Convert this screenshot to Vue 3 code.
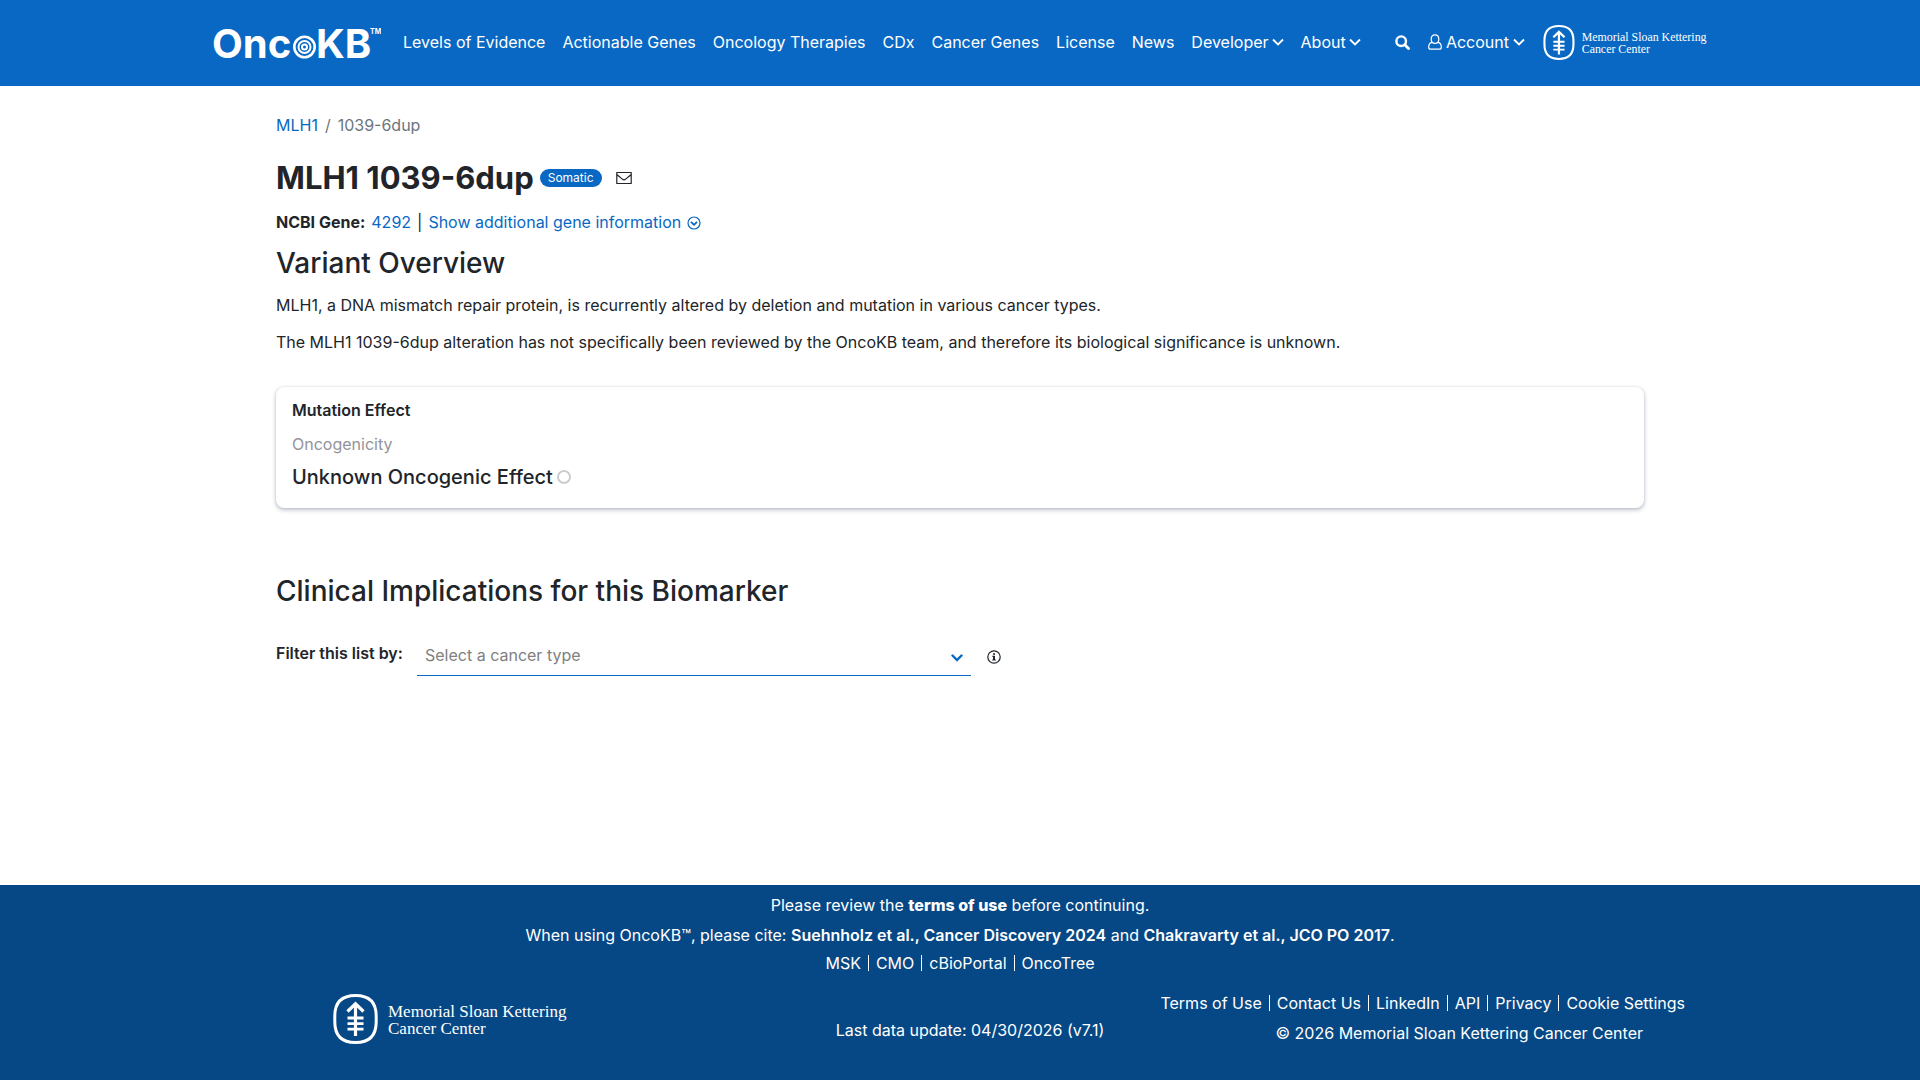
<script setup>
import { h, ref } from 'vue'

const navLinks = [
  'Levels of Evidence',
  'Actionable Genes',
  'Oncology Therapies',
  'CDx',
  'Cancer Genes',
  'License',
  'News'
]
const menus = ['Developer', 'About']
const partnerLinks = ['MSK', 'CMO', 'cBioPortal', 'OncoTree']
const legalLinks = ['Terms of Use', 'Contact Us', 'LinkedIn', 'API', 'Privacy', 'Cookie Settings']
const cancerType = ref('')

const MskLogo = () =>
  h('svg', { viewBox: '0 0 238 50', role: 'img', 'aria-label': 'Memorial Sloan Kettering Cancer Center' }, [
    h('path', {
      d: 'M22.5 1.5C36 1.5 43.2 8 43.2 22V28C43.2 42 36 48.5 22.5 48.5S1.8 42 1.8 28V22C1.8 8 9 1.5 22.5 1.5Z',
      fill: 'none',
      stroke: 'currentColor',
      'stroke-width': 3
    }),
    h('path', { d: 'M22.5 42V10M14.5 17.5L22.5 9.8L30.5 17.5', fill: 'none', stroke: 'currentColor', 'stroke-width': 3.2 }),
    h('path', { d: 'M14.5 24H30.5M14.5 29.6H30.5M14.5 35.2H30.5', stroke: 'currentColor', 'stroke-width': 2.8 }),
    h('text', { x: 55, y: 23, 'font-size': 17, 'font-family': 'Liberation Serif, serif', fill: 'currentColor' }, 'Memorial Sloan Kettering'),
    h('text', { x: 55, y: 40, 'font-size': 17, 'font-family': 'Liberation Serif, serif', fill: 'currentColor' }, 'Cancer Center')
  ])
</script>

<template>
  <div class="page">
    <header class="topbar">
      <div class="topbar-inner">
        <a href="#" class="brand" aria-label="OncoKB">
          <svg viewBox="-3 -10 171 54" width="171" height="54">
            <g fill="#fff" font-family="Inter, sans-serif" font-weight="700">
              <text x="-1" y="33" font-size="40">Onc</text>
              <text x="103" y="33" font-size="40">KB</text>
              <text x="157" y="9" font-size="7">TM</text>
            </g>
            <g fill="none" stroke="#fff" transform="translate(91.500 22)">
              <circle r="10.200" stroke-width="2.600" />
              <circle r="6" stroke-width="2" />
              <circle r="2.500" stroke-width="2" />
            </g>
          </svg>
        </a>
        <nav class="nav">
          <a v-for="l in navLinks" :key="l" href="#">{{ l }}</a>
          <button v-for="m in menus" :key="m" type="button" class="menu">
            {{ m }}
            <svg width="12" height="8" viewBox="0 0 12 8"><path d="M1 1.500L6 6.500L11 1.500" fill="none" stroke="#fff" stroke-width="1.800" /></svg>
          </button>
        </nav>
        <div class="tools">
          <button type="button" class="menu" aria-label="Search">
            <svg width="15" height="15" viewBox="0 0 15 15"><circle cx="6.200" cy="6.200" r="4.800" fill="none" stroke="#fff" stroke-width="2.400" /><path d="M9.800 9.800L13.500 13.500" stroke="#fff" stroke-width="2.800" stroke-linecap="round" /></svg>
          </button>
          <button type="button" class="menu account">
            <svg width="14" height="16" viewBox="0 0 14 16"><path d="M4 8.300C.8 8.800.7 11.500.7 13.200C.7 14.500 1.600 15.200 2.700 15.200H11.300C12.400 15.200 13.300 14.500 13.300 13.200C13.300 11.500 13.200 8.800 10 8.300M7 .8C9.300.8 10.800 2.500 10.800 5S9.200 9.400 7 9.400S3.200 7.500 3.200 5S4.700.8 7 .8Z" fill="none" stroke="#fff" stroke-width="1.200" /></svg>
            Account
            <svg width="12" height="8" viewBox="0 0 12 8"><path d="M1 1.500L6 6.500L11 1.500" fill="none" stroke="#fff" stroke-width="1.800" /></svg>
          </button>
          <a href="#" class="msk-small"><MskLogo /></a>
        </div>
      </div>
    </header>

    <main class="content">
      <nav class="crumbs" aria-label="Breadcrumb">
        <a href="#">MLH1</a><span>/</span><span>1039-6dup</span>
      </nav>

      <div class="title">
        <h1>MLH1 1039-6dup</h1>
        <span class="badge">Somatic</span>
        <a href="#" class="mail" aria-label="Send feedback">
          <svg width="16" height="14" viewBox="0 0 16 14"><path d="M.8 1.500H15.200V12.500H.8ZM.8 3.500C3 5.500 5 7 6.500 8.200C7.500 9 8.500 9 9.500 8.200C11 7 13 5.500 15.200 3.500" fill="none" stroke="#212529" stroke-width="1.200" stroke-linejoin="round" /></svg>
        </a>
      </div>

      <div class="gene">
        <strong>NCBI Gene:</strong>
        <a href="#">4292</a>
        <span>|</span>
        <a href="#" class="more">
          Show additional gene information
          <svg width="14" height="14" viewBox="0 0 14 14"><circle cx="7" cy="7" r="6" fill="none" stroke="currentColor" stroke-width="1.200" /><path d="M4 5.800L7 8.800L10 5.800" fill="none" stroke="currentColor" stroke-width="1.800" /></svg>
        </a>
      </div>

      <h2>Variant Overview</h2>
      <p>MLH1, a DNA mismatch repair protein, is recurrently altered by deletion and mutation in various cancer types.</p>
      <p>The MLH1 1039-6dup alteration has not specifically been reviewed by the OncoKB team, and therefore its biological significance is unknown.</p>

      <section class="card">
        <h3>Mutation Effect</h3>
        <div class="muted">Oncogenicity</div>
        <div class="effect">
          Unknown Oncogenic Effect
          <svg width="14" height="14" viewBox="0 0 14 14"><circle cx="7" cy="7" r="6" fill="none" stroke="#ccc" stroke-width="2" /></svg>
        </div>
      </section>

      <h2>Clinical Implications for this Biomarker</h2>
      <div class="filter">
        <label for="cancer-type">Filter this list by:</label>
        <div class="select">
          <select id="cancer-type" v-model="cancerType">
            <option value="">Select a cancer type</option>
          </select>
          <svg width="12" height="8" viewBox="0 0 12 8"><path d="M1.500 1.500L6 6L10.500 1.500" fill="none" stroke="#0968c3" stroke-width="2.400" stroke-linecap="round" /></svg>
        </div>
        <svg class="info" width="14" height="14" viewBox="0 0 14 14"><circle cx="7" cy="7" r="6.200" fill="none" stroke="#212529" stroke-width="1.200" /><path d="M6 3.200H8V4.800H6ZM5.200 5.800H8V9.600H8.900V10.600H5.200V9.600H6V6.800H5.200Z" fill="#212529" /></svg>
      </div>
    </main>

    <footer class="footer">
      <div class="line">Please review the <a href="#"><b>terms of use</b></a> before continuing.</div>
      <div class="line">When using OncoKB™, please cite: <a href="#">Suehnholz et al., Cancer Discovery 2024</a> and <a href="#">Chakravarty et al., JCO PO 2017</a>.</div>
      <div class="links">
        <a v-for="l in partnerLinks" :key="l" href="#">{{ l }}</a>
      </div>
      <div class="bottom">
        <a href="#" class="msk-large"><MskLogo /></a>
        <div class="update">Last data update: 04/30/2026 (v7.1)</div>
        <div class="legal">
          <div class="links">
            <a v-for="l in legalLinks" :key="l" href="#">{{ l }}</a>
          </div>
          <div class="copyright">© 2026 Memorial Sloan Kettering Cancer Center</div>
        </div>
      </div>
    </footer>
  </div>
</template>

<style>
body {
  margin: 0;
}
</style>

<style scoped>
.page {
  min-height: 100vh;
  display: flex;
  flex-direction: column;
  font: 16px/21px Inter, sans-serif;
  color: #212529;
  background: #fff;
}
a {
  color: #0968c3;
  text-decoration: none;
}
svg {
  flex: none;
  display: block;
}
h1, h2, h3, p {
  margin: 0;
}

.topbar {
  background: #0968c3;
  color: #fff;
}
.topbar-inner {
  max-width: 1500px;
  min-height: 84px;
  margin: 0 auto;
  padding-bottom: 2px;
  display: flex;
  align-items: center;
}
.topbar a {
  color: #fff;
}
.nav {
  display: flex;
  gap: 17px;
  margin-left: 22px;
  white-space: nowrap;
}
.menu {
  display: flex;
  align-items: center;
  gap: 3px;
  padding: 0;
  border: 0;
  background: none;
  color: #fff;
  font: inherit;
}
.account {
  gap: 4px;
}
.tools {
  display: flex;
  align-items: center;
  gap: 18px;
  margin-left: auto;
}
.msk-small svg {
  width: 167px;
  height: 35px;
}

.content {
  box-sizing: border-box;
  width: 100%;
  max-width: 1368px;
  margin: 0 auto;
  padding: 29px 0 40px;
  flex: 1;
}
.crumbs {
  display: flex;
  gap: 7px;
  color: #6c757d;
}
.title {
  display: flex;
  align-items: center;
  margin: 23px 0 16px;
}
h1 {
  font-size: 31px;
  line-height: 37px;
  font-weight: 700;
}
.badge {
  margin-left: 6px;
  padding: 0 8px;
  border-radius: 9px;
  background: #0968c3;
  color: #fff;
  font-size: 12px;
  line-height: 18px;
}
.mail {
  margin-left: 14px;
}
.gene {
  display: flex;
  gap: 6px;
}
.more {
  display: flex;
  align-items: center;
  gap: 6px;
}
h2 {
  margin: 14px 0 16px;
  font-size: 28px;
  line-height: 32px;
  font-weight: 500;
}
p + p {
  margin-top: 16px;
}
.card {
  margin: 34px 0 67px;
  padding: 13px 16px 20px;
  border-radius: 8px;
  box-shadow: 0 2px 4px rgba(40, 50, 90, 0.3), 0 0 2px rgba(40, 50, 90, 0.15);
}
h3 {
  font-size: 16px;
  line-height: 21px;
  font-weight: 600;
}
.muted {
  margin: 13px 0 11px;
  color: #939399;
}
.effect {
  display: flex;
  align-items: center;
  gap: 4px;
  font-size: 20px;
  line-height: 22px;
  font-weight: 500;
}
.filter {
  display: flex;
  align-items: center;
  margin-top: 31px;
}
.filter label {
  width: 141px;
  font-weight: 600;
  margin-bottom: 8px;
}
.select {
  position: relative;
  width: 554px;
}
.select select {
  display: block;
  width: 100%;
  height: 38px;
  padding: 0 32px 2px 8px;
  border: 0;
  border-bottom: 1px solid #0968c3;
  border-radius: 0;
  appearance: none;
  background: none;
  color: #808080;
  font: inherit;
}
.select svg {
  position: absolute;
  right: 8px;
  top: 16px;
  pointer-events: none;
}
.info {
  margin-left: 16px;
}

.footer {
  box-sizing: border-box;
  min-height: 195px;
  padding: 10px 0 32px;
  background: #064885;
  color: #fff;
  text-align: center;
}
.footer a {
  color: #fff;
}
.line {
  margin-bottom: 9px;
}
.line a {
  font-weight: 600;
}
.line b {
  font-weight: 800;
}
.links {
  display: flex;
  justify-content: center;
  line-height: 16px;
}
.links a + a {
  margin-left: 7px;
  padding-left: 7px;
  border-left: 1px solid #fff;
}
.bottom {
  max-width: 1352px;
  margin: 23px auto 0;
  padding-left: 98px;
  display: grid;
  grid-template-columns: 1fr auto auto;
  column-gap: 56px;
  align-items: center;
}
.msk-large svg {
  width: 238px;
  height: 50px;
}
.update {
  align-self: end;
  margin-bottom: 3px;
}
.legal {
  display: flex;
  flex-direction: column;
  align-items: flex-end;
  gap: 12px;
}
.copyright {
  margin-right: 42px;
}
</style>
